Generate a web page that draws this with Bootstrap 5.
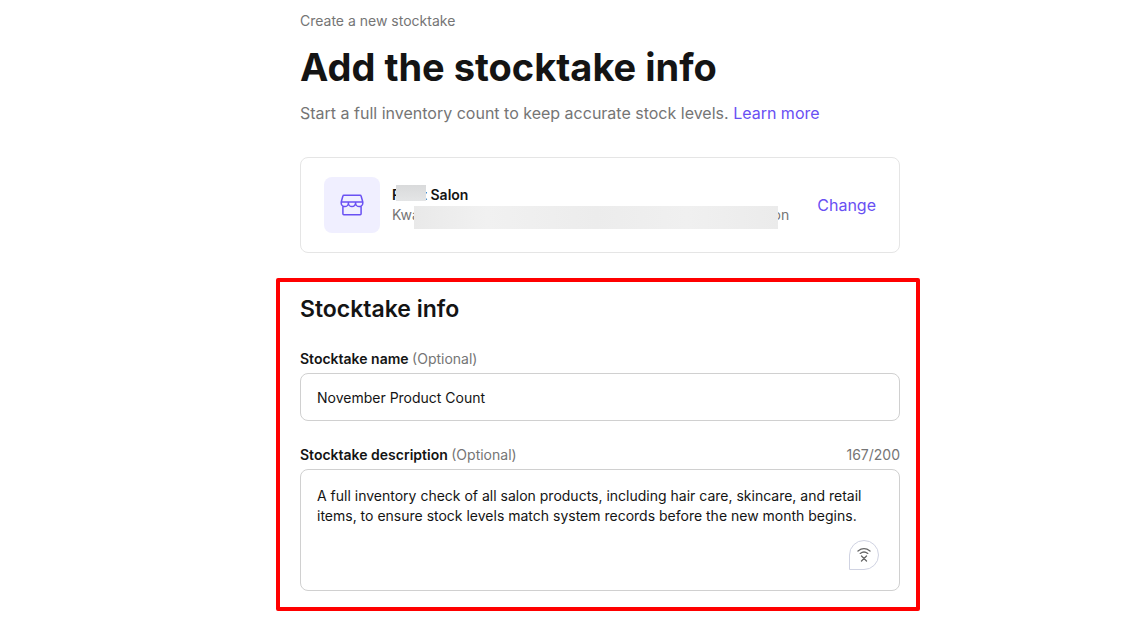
<!DOCTYPE html>
<html lang="en">
<head>
<meta charset="utf-8">
<meta name="viewport" content="width=device-width, initial-scale=1">
<title>Add the stocktake info</title>
<link href="https://cdn.jsdelivr.net/npm/bootstrap@5.3.0/dist/css/bootstrap.min.css" rel="stylesheet">
<style>
  :root { --ink: #141414; --muted: #757575; --accent: #6950f3; }
  body { font-family: Inter, "Liberation Sans", sans-serif; font-size: 14px; line-height: 20px; color: var(--ink); background: #fff; }
  .page-grid { display: grid; grid-template-columns: 276fr 644fr 209fr; }
  .page-column { grid-column: 2; }
  .inset { padding-left: 24px; padding-right: 20px; }
  .page-head { padding-top: 11px; }
  .soft { color: var(--muted); }
  .page-title { font-size: 38px; line-height: 48px; font-weight: 700; margin: 12px 0 10px; }
  .lede { font-size: 16px; line-height: 24px; }
  .accent-link, .accent-link:hover { color: var(--accent); text-decoration: none; }
  .shop-card { border: 1px solid #e5e5e5; border-radius: 8px; padding: 19px 23px; margin-top: 32px; }
  .shop-icon { width: 56px; height: 56px; border-radius: 8px; background: #f0efff; color: var(--accent); }
  .shop-name { font-weight: 600; height: 20px; }
  .address { height: 20px; }
  .redact { position: relative; z-index: 1; flex: none; }
  .redact-name { width: 30px; height: 16px; margin-left: -5px; margin-right: -4px; background: linear-gradient(#d9dadb, #e4e5e6); }
  .redact-address { flex: 1; height: 23px; margin: 1px -5px 0 -6px; background: linear-gradient(90deg, #e9e9e9, #f1f1f1 20%, #ececec 50%, #f0f0f0 75%, #ebebeb); }
  .change-button { border: 0; padding: 0; background: none; font-size: 16px; line-height: 24px; margin-left: 28px; color: var(--accent); }
  .marked { border: 4px solid #f00; border-radius: 2px; margin-top: 25px; padding: 13px 16px 16px 20px; }
  .section-title { font-size: 23px; line-height: 28px; font-weight: 600; margin: 0 0 26px; }
  .field-label { font-weight: 600; margin: 0; line-height: 20px; }
  .field-label .soft { font-weight: 400; }
  .field { border: 1px solid #d0d0d0; border-radius: 8px; color: var(--ink); font-size: 14px; line-height: 20px; padding: 13px 16px; margin-top: 4px; }
  .field:focus { color: var(--ink); }
  input.field { height: 48px; margin-bottom: 24px; }
  textarea.field { height: 122px; padding-top: 16px; resize: none; display: block; }
  .offline { position: absolute; right: 21px; bottom: 21px; width: 30px; height: 30px; padding: 0; border: 1px solid #d0d3e2; border-radius: 15px 15px 15px 0; background: #fff; color: #666; }
</style>
</head>
<body>
<main class="page-grid">
  <div class="page-column">
    <header class="inset page-head">
      <div class="soft">Create a new stocktake</div>
      <h1 class="page-title">Add the stocktake info</h1>
      <p class="lede soft mb-0">Start a full inventory count to keep accurate stock levels. <a class="accent-link" href="#">Learn more</a></p>
    </header>

    <div class="inset">
      <section class="shop-card d-flex align-items-center">
        <div class="shop-icon d-flex align-items-center justify-content-center flex-shrink-0">
          <svg width="24" height="24" viewBox="0 0 24 24" fill="none" stroke="currentColor" stroke-width="1.5" stroke-linejoin="round" stroke-linecap="round" aria-hidden="true">
            <path d="M1.2 9 2.9 3A1 1 0 0 1 3.9 2.2H20.1A1 1 0 0 1 21.1 3L22.8 9ZM1.2 9V10a3.6 3.6 0 0 0 7.2 0V9M8.4 10a3.6 3.6 0 0 0 7.2 0V9M15.6 10a3.6 3.6 0 0 0 7.2 0V9M2.9 13V20.8a.9.9 0 0 0 .9.9H20.2a.9.9 0 0 0 .9-.9V13"/>
          </svg>
        </div>
        <div class="flex-grow-1 ms-2 ps-1">
          <div class="shop-name d-flex align-items-start"><span>P</span><span class="redact redact-name"></span><span>t&nbsp;Salon</span></div>
          <div class="address soft d-flex align-items-start"><span>Kwa</span><span class="redact redact-address"></span><span>on</span></div>
        </div>
        <button type="button" class="change-button">Change</button>
      </section>
    </div>

    <section class="marked">
      <h2 class="section-title">Stocktake info</h2>
      <label class="field-label d-block" for="stockName">Stocktake name <span class="soft">(Optional)</span></label>
      <input class="form-control field" id="stockName" type="text" value="November Product Count">
      <div class="d-flex justify-content-between">
        <label class="field-label" for="stockDescription">Stocktake description <span class="soft">(Optional)</span></label>
        <span class="soft">167/200</span>
      </div>
      <div class="position-relative">
        <textarea class="form-control field" id="stockDescription" maxlength="200">A full inventory check of all salon products, including hair care, skincare, and retail items, to ensure stock levels match system records before the new month begins.</textarea>
        <button type="button" class="offline d-flex align-items-center justify-content-center" aria-label="Offline">
          <svg width="16" height="16" viewBox="0 0 16 16" fill="none" stroke="currentColor" stroke-width="1.3" stroke-linecap="round" aria-hidden="true">
            <path d="M2 4Q8-.6 14 4M4.2 6.4Q8 3.6 11.8 6.4M5.5 9 10.5 14M10.5 9 5.5 14"/>
          </svg>
        </button>
      </div>
    </section>
  </div>
</main>
<script src="https://cdn.jsdelivr.net/npm/bootstrap@5.3.0/dist/js/bootstrap.bundle.min.js"></script>
</body>
</html>
